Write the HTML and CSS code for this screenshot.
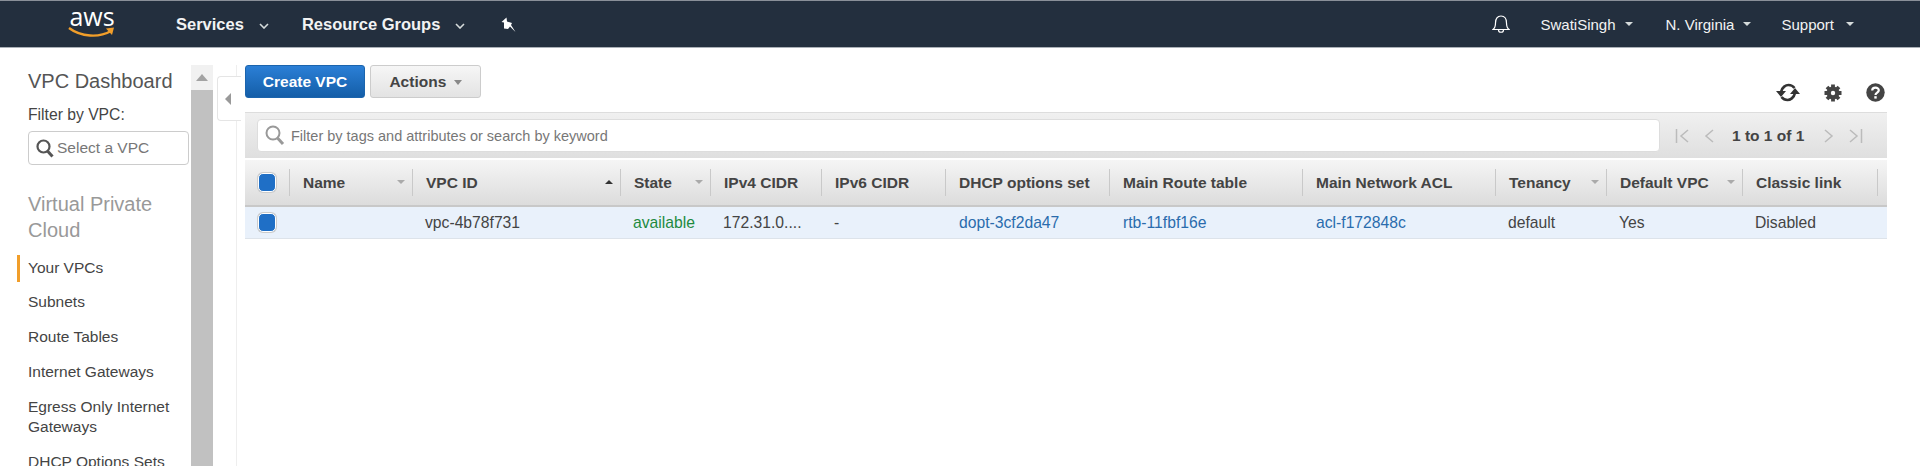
FILE: index.html
```html
<!DOCTYPE html>
<html lang="en">
<head>
<meta charset="UTF-8" />
<title>VPC Management Console</title>
<link rel="stylesheet" href="styles.css">
</head>
<body>

<header class="topnav">
  <a class="logo">
    <span class="logo-text">aws</span>
    <svg class="logo-smile" width="48" height="14" viewBox="0 0 48 14"><path d="M1 3C13 12 31 13 43 6" fill="none" stroke="#f19e2a" stroke-width="2.400"/><path d="M38 3.500L46 2.500L44 10Z" fill="#f19e2a"/></svg>
  </a>
  <a class="nav-main services">Services <svg class="chev" width="10" height="6" viewBox="0 0 10 6"><path d="M1 1L5 5L9 1" fill="none" stroke="#d5dbdb" stroke-width="1.600"/></svg></a>
  <a class="nav-main groups">Resource Groups <svg class="chev" width="10" height="6" viewBox="0 0 10 6"><path d="M1 1L5 5L9 1" fill="none" stroke="#d5dbdb" stroke-width="1.600"/></svg></a>
  <svg class="pin" width="16" height="16" viewBox="0 0 16 16"><path d="M5.500 0.500L0.500 5L3 5.500L3 11.500L7 12L9 9.500L14.500 15L10 8L11 6L6 4.500Z" fill="#fff"/></svg>
  <div class="nav-right">
    <svg class="bell" width="18" height="20" viewBox="0 0 18 20"><path d="M1 15.500C3 14 3.500 12 3.500 9C3.500 5 5.500 2 9 2C12.500 2 14.500 5 14.500 9C14.500 12 15 14 17 15.500ZM6.500 16C6.500 19 11.500 19 11.500 16" fill="none" stroke="#fff" stroke-width="1.200"/></svg>
    <a class="nav-sub user">SwatiSingh <i class="caret"></i></a>
    <a class="nav-sub region">N. Virginia <i class="caret"></i></a>
    <a class="nav-sub support">Support <i class="caret"></i></a>
  </div>
</header>

<div class="page">
  <aside class="sidebar">
    <h2>VPC Dashboard</h2>
    <label class="filter-label">Filter by VPC:</label>
    <div class="vpc-select">
      <svg width="18" height="19" viewBox="0 0 18 19"><circle cx="7.500" cy="7.500" r="6" fill="none" stroke="#555" stroke-width="2.200"/><path d="M11.500 12L16.500 17.500" stroke="#555" stroke-width="3"/></svg>
      <span>Select a VPC</span>
    </div>
    <h3>Virtual Private Cloud</h3>
    <ul class="side-links">
      <li class="active">Your VPCs</li>
      <li>Subnets</li>
      <li>Route Tables</li>
      <li>Internet Gateways</li>
      <li>Egress Only Internet Gateways</li>
      <li>DHCP Options Sets</li>
    </ul>
  </aside>

  <div class="scrollbar">
    <div class="scroll-up"><i></i></div>
    <div class="scroll-thumb"></div>
  </div>

  <div class="collapse-col">
    <div class="collapse-tab"><i></i></div>
  </div>

  <main class="content">
    <div class="toolbar">
      <button class="btn-primary">Create VPC</button>
      <button class="btn-default">Actions <i class="caret-grey"></i></button>
      <div class="tools">
        <svg width="24" height="21" viewBox="0 0 24 21"><path d="M5 10C6 5 10 3 12.500 3C15 3 17 4 18.500 6M19 11C18 16 14 18 11.500 18C9 18 7 17 5.500 15" fill="none" stroke="#333" stroke-width="2.600"/><path d="M0 9H10L5 15ZM14 12H24L19 6Z" fill="#333"/></svg>
        <svg width="18" height="18" viewBox="0 0 18 18"><circle cx="9" cy="9" r="6.500" fill="#444"/><path d="M9 0.500V17.500M0.500 9H17.500M3 3L15 15M15 3L3 15" stroke="#444" stroke-width="3.800"/><circle cx="9" cy="9" r="2.200" fill="#fff"/></svg>
        <svg width="19" height="19" viewBox="0 0 19 19"><circle cx="9.500" cy="9.500" r="9.200" fill="#444"/><path d="M6.200 7.500C6.200 3.800 12.800 3.800 12.800 7.300C12.800 9.600 9.500 9.500 9.500 12" fill="none" stroke="#fff" stroke-width="2.200"/><rect x="8.300" y="13.200" width="2.400" height="2.400" fill="#fff"/></svg>
      </div>
    </div>

    <div class="filter-bar">
      <div class="search-box">
        <svg width="20" height="21" viewBox="0 0 20 21"><circle cx="8" cy="8" r="6.500" fill="none" stroke="#999" stroke-width="2"/><path d="M12.500 13L18 19" stroke="#999" stroke-width="3"/></svg>
        <span>Filter by tags and attributes or search by keyword</span>
      </div>
      <div class="pager">
        <svg width="16" height="14" viewBox="0 0 16 14"><path d="M1.500 0V14M13 1L6 7L13 13" fill="none" stroke="#bbb" stroke-width="1.500"/></svg>
        <svg class="pager-prev" width="10" height="14" viewBox="0 0 10 14"><path d="M9 1L2 7L9 13" fill="none" stroke="#bbb" stroke-width="1.500"/></svg>
        <span>1 to 1 of 1</span>
        <svg class="pager-next" width="10" height="14" viewBox="0 0 10 14"><path d="M1 1L8 7L1 13" fill="none" stroke="#bbb" stroke-width="1.500"/></svg>
        <svg width="16" height="14" viewBox="0 0 16 14"><path d="M14.500 0V14M3 1L10 7L3 13" fill="none" stroke="#bbb" stroke-width="1.500"/></svg>
      </div>
    </div>

    <div class="table">
      <div class="thead">
        <div class="th check"><i class="cb"></i></div>
        <div class="th">Name<i class="sort"></i></div>
        <div class="th">VPC ID<i class="sort up"></i></div>
        <div class="th">State<i class="sort"></i></div>
        <div class="th">IPv4 CIDR</div>
        <div class="th">IPv6 CIDR</div>
        <div class="th">DHCP options set</div>
        <div class="th">Main Route table</div>
        <div class="th">Main Network ACL</div>
        <div class="th">Tenancy<i class="sort"></i></div>
        <div class="th">Default VPC<i class="sort"></i></div>
        <div class="th">Classic link</div>
        <div class="th last"></div>
      </div>
      <div class="trow">
        <div class="td check"><i class="cb"></i></div>
        <div class="td"></div>
        <div class="td">vpc-4b78f731</div>
        <div class="td green">available</div>
        <div class="td">172.31.0....</div>
        <div class="td">-</div>
        <div class="td link">dopt-3cf2da47</div>
        <div class="td link">rtb-11fbf16e</div>
        <div class="td link">acl-f172848c</div>
        <div class="td">default</div>
        <div class="td">Yes</div>
        <div class="td">Disabled</div>
        <div class="td"></div>
      </div>
    </div>
  </main>
</div>

</body>
</html>
```

FILE: styles.css
```css
html, body {
  margin: 0;
  height: 466px;
  overflow: hidden;
  background: #fff;
  font-family: "Liberation Sans", Arial, sans-serif;
  color: #444;
}
* {
  box-sizing: border-box;
}

/* top bar */
.topnav {
  display: flex;
  align-items: center;
  height: 48px;
  background: #232f3e;
  border-top: 1px solid #8a9099;
  border-bottom: 1px solid #aab0b7;
  color: #fff;
}
.logo {
  display: flex;
  flex-direction: column;
  align-items: center;
  width: 48px;
  margin-left: 68px;
  margin-top: -5px;
}
.logo-text {
  font-family: "Open Sans", sans-serif;
  font-size: 25px;
  line-height: 22px;
}
.logo-smile {
  margin-top: -2px;
}
.nav-main {
  display: flex;
  align-items: center;
  font-size: 16.500px;
  font-weight: bold;
  color: #f2f3f3;
}
.chev {
  margin-left: 15px;
  margin-top: 3px;
}
.services {
  margin-left: 60px;
}
.groups {
  margin-left: 33px;
}
.pin {
  margin-left: 36px;
  margin-top: 2px;
}
.nav-right {
  display: flex;
  align-items: center;
  margin-left: auto;
  padding-right: 66px;
}
.nav-sub {
  display: flex;
  align-items: center;
  font-size: 15px;
  color: #f2f3f3;
}
.caret {
  width: 0;
  height: 0;
  margin-left: 9px;
  border-left: 4px solid transparent;
  border-right: 4px solid transparent;
  border-top: 4px solid #d5dbdb;
}
.support .caret {
  margin-left: 12px;
}
.user {
  margin-left: 30px;
}
.region {
  margin-left: 33px;
}
.support {
  margin-left: 30px;
}

/* layout */
.page {
  display: flex;
  height: 418px;
  padding-top: 17px;
}

/* sidebar */
.sidebar {
  width: 190px;
  padding-left: 28px;
  flex: none;
  overflow: hidden;
}
.sidebar h2 {
  margin: 4px 0 0;
  font-size: 20px;
  font-weight: normal;
  line-height: 24px;
  color: #555;
}
.filter-label {
  display: block;
  margin-top: 12px;
  font-size: 15.700px;
  line-height: 20px;
}
.vpc-select {
  display: flex;
  align-items: center;
  gap: 3px;
  width: 161px;
  height: 34px;
  margin-top: 6px;
  padding-left: 7px;
  border: 1px solid #ccc;
  border-radius: 4px;
  font-size: 15.500px;
  color: #777;
}
.sidebar h3 {
  margin: 26px 0 0;
  width: 150px;
  font-size: 20px;
  font-weight: normal;
  line-height: 26px;
  color: #999;
}
.side-links {
  list-style: none;
  margin: 12px 0 0 -11px;
  padding: 0;
  font-size: 15.500px;
  line-height: 20px;
}
.side-links li {
  width: 170px;
  padding: 3px 0 12px 8px;
  border-left: 3px solid transparent;
}
.side-links li.active {
  padding-bottom: 4px;
  margin-bottom: 7px;
  border-left-color: #f19e2a;
}

/* scrollbar and collapse tab */
.scrollbar {
  display: flex;
  flex-direction: column;
  width: 22px;
  margin-left: 1px;
  background: #f1f1f1;
  flex: none;
}
.scroll-up {
  display: flex;
  align-items: center;
  justify-content: center;
  height: 25px;
}
.scroll-up i {
  border-left: 6px solid transparent;
  border-right: 6px solid transparent;
  border-bottom: 7px solid #a3a3a3;
}
.scroll-thumb {
  flex: 1;
  background: #c1c1c1;
}
.collapse-col {
  width: 24px;
  flex: none;
  padding-top: 11px;
  border-right: 1px solid #eee;
}
.collapse-tab {
  display: flex;
  align-items: center;
  justify-content: center;
  width: 24px;
  height: 45px;
  margin-left: 4px;
  border: 1px solid #e5e5e5;
  border-right: 0;
  border-radius: 4px 0 0 4px;
  background: #fff;
}
.collapse-tab i {
  border-top: 6px solid transparent;
  border-bottom: 6px solid transparent;
  border-right: 6px solid #999;
  margin-left: -3px;
}

/* main area */
.content {
  flex: 1;
  min-width: 0;
  padding: 0 33px 0 8px;
}
.toolbar {
  display: flex;
  align-items: flex-start;
  height: 47px;
}
.btn-primary,
.btn-default {
  height: 33px;
  border-radius: 3px;
  font-family: inherit;
  font-size: 15.500px;
  font-weight: bold;
}
.btn-primary {
  width: 120px;
  color: #fff;
  background: linear-gradient(#2b7fd6, #145ea8);
  border: 1px solid #1b64ad;
}
.btn-default {
  width: 111px;
  margin-left: 5px;
  color: #444;
  background: linear-gradient(#f6f6f6, #e3e3e3);
  border: 1px solid #ccc;
}
.caret-grey {
  display: inline-block;
  margin-left: 3px;
  vertical-align: 2px;
  border-left: 4px solid transparent;
  border-right: 4px solid transparent;
  border-top: 5px solid #888;
}
.tools {
  display: flex;
  align-items: center;
  gap: 24px;
  margin-left: auto;
  padding-top: 17px;
  padding-right: 2px;
}

/* filter row */
.filter-bar {
  display: flex;
  align-items: center;
  height: 46px;
  padding-left: 12px;
  background: linear-gradient(#f0f0f0, #dfdfdf);
  border-top: 1px solid #ddd;
}
.search-box {
  display: flex;
  align-items: center;
  gap: 6px;
  width: 1403px;
  height: 33px;
  padding-left: 7px;
  background: #fff;
  border: 1px solid #ddd;
  border-radius: 4px;
  font-size: 14.500px;
  color: #777;
}
.pager {
  display: flex;
  align-items: center;
  margin-left: 15px;
  font-size: 15.500px;
  font-weight: bold;
  color: #444;
}
.pager-prev {
  margin-left: 13px;
}
.pager span {
  margin: 0 20px 0 18px;
}
.pager-next {
  margin-right: 13px;
}

/* table */
.table {
  margin-top: 2px;
}
.thead,
.trow {
  display: grid;
  grid-template-columns: 45px 123px 208px 90px 111px 124px 164px 193px 193px 111px 136px 135px 9px;
}
.thead {
  height: 47px;
  background: linear-gradient(#f5f5f5, #dcdcdc);
  border-bottom: 2px solid #c8c8c8;
}
.th {
  display: flex;
  align-items: center;
  position: relative;
  padding-left: 13px;
  font-size: 15.500px;
  font-weight: bold;
  color: #444;
}
.th::after {
  content: "";
  position: absolute;
  right: 0;
  top: 9px;
  bottom: 9px;
  width: 1px;
  background: #c9c9c9;
}
.th.last::after {
  display: none;
}
.th.check,
.td.check {
  padding-left: 13px;
}
.sort {
  position: absolute;
  right: 8px;
  top: 20px;
  border-left: 4px solid transparent;
  border-right: 4px solid transparent;
  border-top: 4px solid #aaa;
}
.sort.up {
  border-top: 0;
  border-bottom: 4px solid #333;
}
.cb {
  display: block;
  width: 18px;
  height: 19px;
  border-radius: 5px;
  background: #1f6fc6;
  border: 1px solid #fff;
  box-shadow: 0 0 0 1px #ccc;
}
.trow {
  height: 32px;
  background: #e9f1fb;
  border-bottom: 1px solid #dde3ea;
}
.td {
  display: flex;
  align-items: center;
  padding-left: 12px;
  font-size: 15.700px;
  color: #444;
}
.green {
  color: #1d8a3e;
}
.link {
  padding-left: 13px;
  color: #2a6cad;
}
```
